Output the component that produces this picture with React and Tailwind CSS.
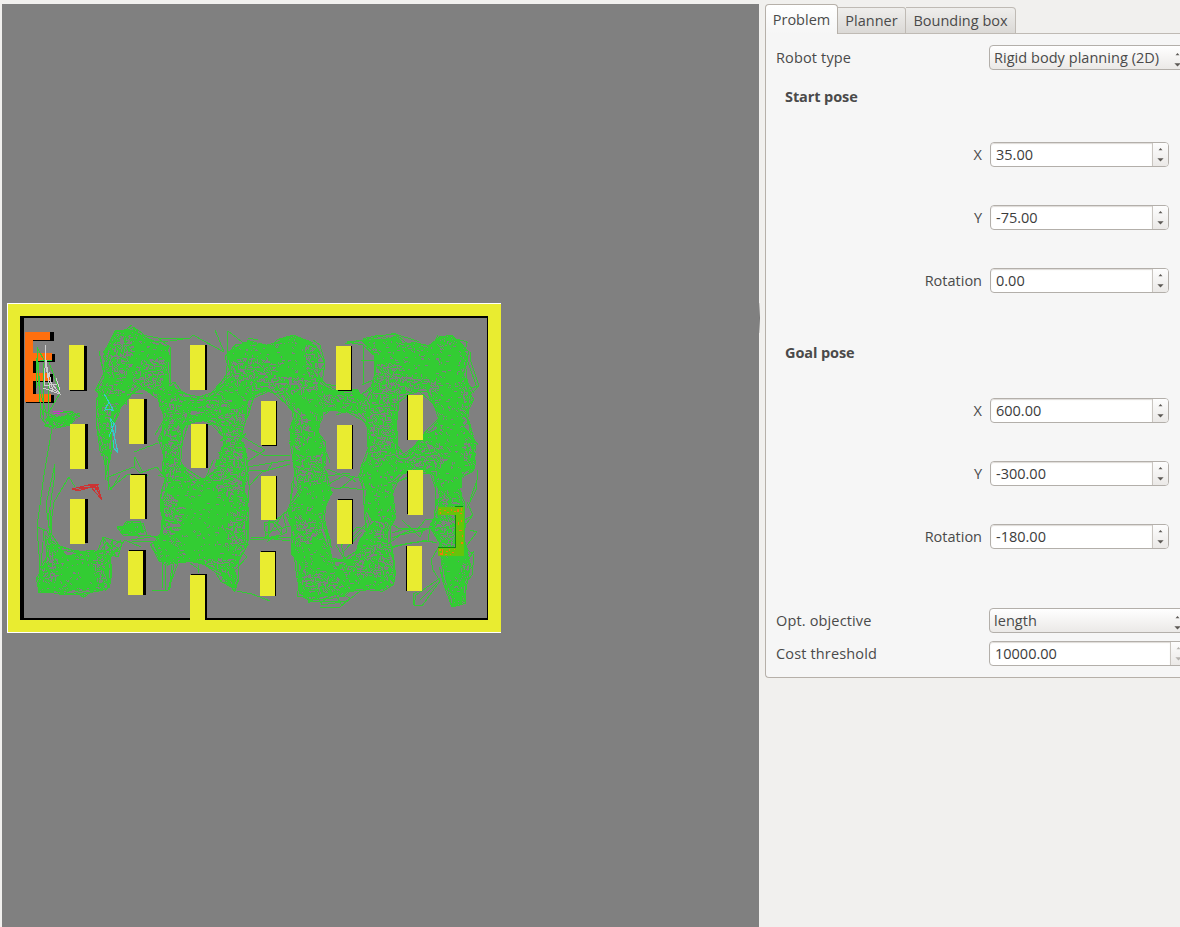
import React from "react";

const GREEN = "#33cc33";
const YELLOW = "#e9ec30";
const GRAY = "#808080";

// Free-space areas densely covered by the roadmap.
const REGIONS = [
  "133,327 124,331 114,334 110,342 103,352 105,376 97,398 98,402 122,402 134,382 144,390 156,396 168,392 166,365 169,346 158,345 148,342",
  "98,398 100,425 103,445 106,460 110,461 109,430 115,415 126,398 112,396",
  "162,388 160,397 165,415 165,428 159,437 167,452 162,472 168,485 160,508 165,528 155,545 164,560 190,562 213,565 224,579 234,592 236,590 234,568 241,551 249,545 242,528 248,518 244,490 248,478 244,462 246,448 241,436 245,415 249,398 258,394 272,390 284,392 288,400 298,412 296,422 289,428 291,441 297,448 292,462 296,478 299,495 288,510 289,520 294,532 291,555 301,565 300,585 299,594 312,597 320,597 345,594 360,588 380,590 391,586 393,568 388,550 387,530 386,522 396,518 391,505 391,482 400,474 437,471 440,500 437,515 430,524 438,535 441,555 445,578 451,592 453,606 462,605 464,596 461,588 466,578 469,555 462,540 462,472 475,470 476,442 466,428 467,408 472,392 462,372 467,358 464,345 452,335 440,336 427,348 417,344 403,344 395,336 385,338 362,341 374,352 375,382 368,402 350,392 330,390 319,383 313,368 318,357 311,342 298,338 286,336 272,346 248,340 227,353 233,375 222,388 205,400 182,397 174,385",
];
// Gaps inside the covered areas.
const GAPS = [
  "183,424 190,419 212,420 220,424 223,444 216,460 213,476 204,478 194,484 184,470 178,452 182,436",
  "322,408 345,413 364,414 371,442 362,475 366,492 364,508 373,522 364,533 353,558 336,566 322,532 323,514 331,495 325,478 326,455 318,430",
  "397,395 432,388 433,405 442,415 435,422 437,429 422,437 414,448 408,460 396,458 394,440 396,410",
  "176,404 190,406 205,405 200,408 180,407",
  "182,410 200,412 218,410 212,416 184,417",
];
const BLOBS = [
  "47,538 67,555 97,553 110,556 108,582 104,589 70,591 38,592 41,567 52,562",
  "119,527 133,523 142,524 144,533 124,534",
  "44,419 60,416 78,414 69,422 53,427",
  "154,545 164,535 176,545 178,562 163,562",
];
// Areas where the cover is thinner: [x, y, radius x, radius y].
const THIN = [
  [108, 395, 15, 12], [106, 440, 7, 45], [172, 440, 12, 40], [200, 405, 32, 16],
  [235, 372, 16, 10], [250, 368, 25, 10], [232, 425, 14, 20], [282, 385, 40, 8], [296, 430, 14, 22],
  [230, 470, 20, 25], [345, 403, 26, 14], [380, 420, 17, 42], [385, 375, 22, 12], [345, 350, 30, 10],
  [152, 380, 20, 22], [240, 530, 14, 20], [168, 515, 13, 20], [310, 470, 25, 15], [298, 530, 20, 15],
  [320, 585, 22, 14], [425, 455, 22, 14], [470, 400, 9, 40], [445, 520, 12, 30], [105, 565, 12, 20],
  [48, 565, 10, 18], [60, 418, 20, 6], [220, 570, 20, 12], [385, 540, 12, 25], [120, 350, 12, 30],
  [408, 385, 35, 8], [472, 450, 8, 20], [365, 560, 28, 16], [315, 355, 10, 25],
];
const pt = (s) => s.split(" ").map((p) => p.split(",").map(Number));
const poly = (s) => "M" + s.split(" ").join("L") + "Z";

function inside(x, y, p) {
  let r = false;
  for (let i = 0, j = p.length - 1; i < p.length; j = i++) {
    const [xi, yi] = p[i];
    const [xj, yj] = p[j];
    if (yi > y !== yj > y && x < ((xj - xi) * (y - yi)) / (yj - yi) + xi) r = !r;
  }
  return r;
}
function edgeDistance(x, y, p) {
  let m = 1e9;
  for (let i = 0, j = p.length - 1; i < p.length; j = i++) {
    const dx = p[i][0] - p[j][0];
    const dy = p[i][1] - p[j][1];
    let t = ((x - p[j][0]) * dx + (y - p[j][1]) * dy) / (dx * dx + dy * dy);
    t = Math.max(0, Math.min(1, t));
    m = Math.min(m, Math.hypot(x - p[j][0] - t * dx, y - p[j][1] - t * dy));
  }
  return m;
}

function buildRoadmap() {
  let seed = 90210;
  const rnd = () => {
    seed = (seed * 1664525 + 1013904223) >>> 0;
    return seed / 4294967296;
  };
  const polys = [...REGIONS, ...BLOBS].map(pt);
  const gaps = GAPS.map(pt);
  let holes = "";
  for (let i = 0; i < 32000; i++) {
    const x = 28 + rnd() * 455;
    const y = 322 + rnd() * 292;
    if (!polys.some((p) => inside(x, y, p))) continue;
    const d = Math.min(...[...polys, ...gaps].map((p) => edgeDistance(x, y, p)));
    const cluster = 0.5 + 0.5 * Math.sin(x * 0.21 + 2 * Math.sin(y * 0.13)) * Math.cos(y * 0.19 + x * 0.05);
    const thin = THIN.some(([cx, cy, rx, ry]) => ((x - cx) / rx) ** 2 + ((y - cy) / ry) ** 2 < 1);
    const chance = thin ? 0.95 : (d < 6 ? 0.5 : 0.17) * (0.2 + 1.3 * cluster);
    if (rnd() > chance) continue;
    const px = Math.floor(x);
    const py = Math.floor(y);
    const k = rnd();
    if (k < 0.4) holes += `M${px} ${py}h1v1h-1z`;
    else if (k < 0.65) {
      const w = 2 + Math.floor(rnd() * (thin ? 4 : 2));
      holes += `M${px} ${py}h${w}v1h-${w}z`;
    } else if (k < 0.85) {
      const h = 2 + Math.floor(rnd() * (thin ? 3 : 1));
      holes += `M${px} ${py}h1v${h}h-1z`;
    } else holes += `M${px} ${py}h1v1h1v1h-1v-1h-1z`;
  }
  let fray = "";
  [...polys, ...gaps].forEach((p) => {
    const around = [];
    for (let i = 0; i < p.length; i++) {
      const a = p[i];
      const b = p[(i + 1) % p.length];
      const steps = Math.max(1, Math.round(Math.hypot(b[0] - a[0], b[1] - a[1]) / 5));
      for (let s = 0; s < steps; s++)
        around.push([
          a[0] + ((b[0] - a[0]) * s) / steps + (rnd() - 0.5) * 8,
          a[1] + ((b[1] - a[1]) * s) / steps + (rnd() - 0.5) * 8,
        ]);
    }
    around.forEach((a) => {
      const i = around.indexOf(a);
      for (let k = 0; k < 2; k++) {
        const b = around[(i + 1 + Math.floor(rnd() * 5)) % around.length];
        if (Math.hypot(a[0] - b[0], a[1] - b[1]) < 26)
          fray += `M${a[0].toFixed(1)} ${a[1].toFixed(1)}L${b[0].toFixed(1)} ${b[1].toFixed(1)}`;
      }
    });
  });
  return { holes, fray };
}
const { holes, fray } = buildRoadmap();

// Sparse roadmap edges.
const EDGES = [
  "37,347 38,370 41,418 47,425 52,428 44,475 37,527 40,567 38,593",
  "37,347 45,362 48,375 49,418M37,347 40,390 48,420M43,362 44,415M40,360 52,361M49,362 60,393 49,412M36,358 36,388",
  "55,464 54,480 48,520 52,545 55,560M55,464 46,505 50,535M44,420 42,410 62,420 80,413",
  "69,477 54,502 50,530M69,477 75,487M37,527 47,531 53,545M50,510 52,535 66,556M41,565 44,530",
  "142,335 158,338 190,338 193,335 224,352M170,341 190,338M158,338 170,347 171,385M167,347 167,380",
  "133,327 142,333 150,344M142,335 130,346M142,341 168,341",
  "215,330 224,352M228,331 227,352M228,331 246,345M228,352 226,380 215,395M248,338 258,340",
  "107,478 118,473 134,467 140,473 157,467 165,478M107,478 111,490 120,475M108,462 108,490M134,467 135,457 143,473M111,488 128,474 148,476",
  "134,452 158,443M155,435 167,415M158,475 175,480",
  "97,553 103,537 110,549 121,540M99,553 107,542 116,556M103,537 122,543 118,557 104,552 121,541M110,543 119,549 108,557 112,541M98,550 120,552M103,538 106,556 122,546M113,541 111,557",
  "121,545 125,540 141,547M131,540 150,537 167,535M147,535 158,538M132,541 160,542M117,527 143,523 147,535 123,535 117,527M117,527 145,531M119,530 133,522",
  "152,590 168,590 178,563M162,562 162,588M165,564 165,590M169,590 172,565M174,564 170,588",
  "83,592 83,598 92,591M76,592 83,597M40,593 52,588M110,555 111,583 105,591M107,553 107,588",
  "198,565 198,573M237,591 252,594 270,601M235,570 247,557 243,553M190,563 200,570",
  "248,448 263,455 290,456M247,462 265,450 240,435M247,467 290,460M225,418 225,445M250,485 262,472 290,464M247,470 268,470 272,463",
  "250,537 290,538M250,540 292,537M264,523 266,538 282,516M268,521 269,540M272,521 282,535",
  "264,523 275,521 287,511M265,526 274,521 281,527 281,535 266,538M270,519 268,541 287,532M265,533 290,526M266,538 290,541M283,514 287,532",
  "313,362 325,363 322,382 318,375 325,363 317,350M325,363 320,345 313,340M325,363 324,370 314,368",
  "347,342 363,345 373,355M347,342 365,340 395,333 402,343M363,345 364,385M361,360 375,361M362,385 375,379M345,344 372,338",
  "327,403 350,405 367,407M325,410 350,412 367,412M324,415 345,399 366,411M325,398 340,410 366,399M330,388 345,407M336,415 367,403",
  "327,485 345,475 356,482M327,487 340,489 355,476M330,495 318,500M327,469 340,474M340,487 366,490M345,475 365,479M327,476 350,473",
  "334,560 357,562 367,555M334,572 352,561M336,545 345,560 340,540M341,546 357,527 368,530M343,552 362,532M350,540 366,524M342,575 362,545 366,558M341,565 360,552",
  "392,533 405,529 420,532 437,525M387,545 400,535 427,529M390,547 410,543 428,541 437,543M402,520 420,537 424,528M392,538 412,530M428,541 430,527",
  "387,549 402,545 427,540M388,522 400,529 437,528M417,530 425,520 440,519",
  "417,592 413,594 414,605 422,606 440,581 433,570 431,560 440,545M414,605 416,595 440,578M420,600 437,583",
  "320,607 340,607 350,598 342,594M308,603 320,595M320,603 335,593 342,606M340,607 360,591M302,596 310,601 345,602",
  "297,597 300,580M297,597 312,596M308,603 315,593 322,605 341,602",
  "478,470 476,490 467,508M477,480 470,500M467,502 473,515 463,528M473,515 465,520M470,530 477,532 465,548M474,551 468,560M465,548 474,555 472,575 462,588",
  "470,352 471,362 479,386 473,392M468,362 477,388M463,375 474,393M479,386 470,388M467,430 478,445",
  "172,397 235,400M174,405 230,403M172,413 238,406M174,421 234,412M183,425 219,416M175,424 212,424M176,402 190,416M204,396 218,418",
  "172,393 182,400 214,397 235,390M175,410 207,409 222,414M205,395 205,415M170,418 200,408 235,409",
  "260,345 252,371M163,410 164,440M98,410 108,438 108,480M102,395 143,393M97,400 118,399 135,384",
  "96,398 97,426 107,475M104,445 109,478M96,426 105,455 106,480M98,402 115,414 125,402",
  "395,458 408,461 418,450M397,460 404,473M414,447 423,439 430,453M418,445 412,448 430,460M392,455 410,466 425,458M420,455 400,470",
];

const boxes = [
  [69, 345, 45, 70, 346, 17, 45], [70, 424, 45, 71, 424, 17, 45], [129, 399, 45, 130, 399, 17, 45],
  [70, 499, 45, 71, 499, 17, 44], [130, 475, 44, 131, 474, 16, 45], [128, 551, 44, 129, 550, 17, 45],
  [190, 345, 45, 191, 345, 16, 45], [191, 424, 44, 192, 424, 16, 44], [261, 401, 44, 262, 401, 15, 45],
  [336, 346, 44, 338, 346, 14, 45], [337, 425, 44, 338, 425, 15, 44], [261, 476, 44, 262, 476, 15, 43],
  [260, 552, 44, 261, 551, 15, 45], [337, 500, 44, 338, 499, 15, 45], [408, 395, 45, 407, 395, 15, 45],
  [408, 470, 45, 407, 471, 15, 43], [407, 546, 45, 406, 546, 15, 45], [190, 575, 47, 191, 574, 16, 46],
];

const line = (s) =>
  s.split("M").map((run) => "M" + run.trim().split(" ").join("L")).join("");

function Scene() {
  return (
    <svg width="757" height="923" viewBox="2 4 757 923" shapeRendering="crispEdges" className="block">
      <path d="M7 303h494v330h-494z" fill="#fff" />
      <path d="M8 304h493v328h-493z" fill={YELLOW} />
      <path d="M20 316h468v304h-468z" fill="#000" />
      <path d="M24 318h463v300h-463z" fill={GRAY} />
      <path d="M50 332h4v9H33v13h22v8H36v12h17v8H36v13h18v8H26V336h7V332z" fill="#000" />
      <path d="M36 341h16v12H36zM36 362h16v11H36zM36 382h14v12H36z" fill={GRAY} />
      <path d="M25 332h25v8H33v13h19v8H33v12h17v8H33v13h18v8H25z" fill="#ff6f0e" />
      {REGIONS.map((r) => <path key={r} d={poly(r)} fill={GREEN} />)}
      {GAPS.map((r) => <path key={r} d={poly(r)} fill={GRAY} />)}
      <path d="M328 390L358 389L366 404L366 407L345 410L330 400Z" fill={GREEN} />
      {BLOBS.map((r) => <path key={r} d={poly(r)} fill={GREEN} />)}
      <path d={holes} fill={GRAY} />
      <g fill="none" stroke={GREEN} strokeWidth="1">
        <path d={fray} />
        {EDGES.map((e) => <path key={e} d={line(e)} />)}
      </g>
      {boxes.map(([x, y, h, sx, sy, sw, sh]) => (
        <g key={x + "-" + y}>
          <rect x={sx} y={sy} width={sw} height={sh} fill="#000" />
          <rect x={x} y={y} width="15" height={h} fill={YELLOW} />
        </g>
      ))}
      <path d="M438 507h26v49h-26v-8h18v-33h-18z" fill="#66c40a" />
      <path d="M455 515h1v33h-18v-1h17zM455 506h8v1h-8z" fill="#0d8a12" />
      <path
        d="M439 509h2v1h-2zM440 512h1v2h-1zM444 510h2v1h-2zM447 512h2v1h-2zM451 509h1v2h-1zM454 511h2v1h-2zM457 509h2v3h-2zM461 508h1v3h-1zM460 513h2v1h-2zM458 522h1v3h-1zM461 520h1v2h-1zM459 530h3v1h-3zM462 535h1v2h-1zM461 542h2v2h-2zM439 549h2v2h-2zM442 549h1v4h-1zM440 553h3v2h-3zM446 551h2v1h-2zM449 549h1v2h-1zM452 552h2v1h-2zM445 554h2v1h-2zM454 549h1v1h-1zM450 554h1v1h-1z"
        fill="#f0780e"
      />
      <g fill="none" strokeWidth="1">
        <path d="M45.500 345V360L44 385M46 360L49 380L60 394L43 388M49 372L53 392M45 362L50 388L60 393M56 378L60 390M44 386L57 384" stroke="#cfcfcf" />
        <path d="M53 412L56 411H63M54 413H60" stroke="#cc33cc" />
        <path d="M72 489L88 485L97 484L102 500L91 487L78 491ZM74 490L95 486L102 500M77 488L98 487M95 484V490M84 486L98 485L97 489L102 500" stroke="#cc3333" />
        <path d="M104 394L109 402L105 410L113 409L108 401M108 409L114 411M110 418L116 426L113 447L118 453L113 430L110 418M111 424L115 440L118 453M105 410L107 405M114 424L109 437" stroke="#33cccc" />
      </g>
    </svg>
  );
}

function Arrows({ pale, className = "" }) {
  const c = pale ? "#b5b2ae" : "#5c5955";
  return (
    <svg width="7" height="15" viewBox="0 0 7 15" className={`shrink-0 ${className}`}>
      <path d="M1.500 3.300L3.500 1L5.500 3.300Z" fill={c} />
      <path d="M0.400 11.300L3.500 14.500L6.600 11.300Z" fill={c} />
    </svg>
  );
}

function Spin({ value, wide, pale }) {
  return (
    <div className={`flex h-[25px] shrink-0 overflow-hidden rounded-[4px] border border-[#b3afaa] bg-white ${wide ? "w-[198px]" : "w-[179px]"}`}>
      <div className="flex grow items-center rounded-l-[3px] pl-[5px] text-[#3c3c3c] shadow-[inset_0_1px_1px_#dedbd8]">{value}</div>
      <div className="flex w-[16px] shrink-0 items-center justify-center border-l border-[#c9c5c0] bg-linear-to-b from-[#fdfdfd] to-[#ebe9e7]">
        <Arrows pale={pale} />
      </div>
    </div>
  );
}

function Combo({ value }) {
  return (
    <div className="flex h-[25px] w-[210px] shrink-0 items-center rounded-[4px] border border-[#b3afaa] bg-linear-to-b from-white to-[#ebe9e7] pl-[4px]">
      <span className="w-[180px] tracking-[0.04px]">{value}</span>
      <Arrows className="mt-[3px]" />
    </div>
  );
}

function Pose({ title, rows }) {
  return (
    <section className="h-[256px]">
      <h2 className="ml-[19px] h-[26px] font-bold leading-[26px] tracking-[-0.1px]">{title}</h2>
      <div className="mt-[32px] flex flex-col gap-[38px]">
        {rows.map(([label, value]) => (
          <div key={label} className="flex h-[25px] items-center">
            <span className="w-[217px] pr-[1px] text-right">{label}</span>
            <div className="ml-[7px]"><Spin value={value} /></div>
          </div>
        ))}
      </div>
    </section>
  );
}

function Field({ label, children }) {
  return (
    <div className="flex h-[25px] items-center">
      <span className="ml-[10px] w-[213px] shrink-0 tracking-[0.15px]">{label}</span>
      {children}
    </div>
  );
}

export default function App() {
  return (
    <div className="flex h-[927px] w-[1180px] overflow-hidden whitespace-nowrap bg-[#f1f0ee] font-['Open_Sans','Noto_Sans',sans-serif] text-[14.5px] text-[#4a4a4a]">
      <main className="mt-[4px] ml-[2px] h-[923px] w-[757px] shrink-0 bg-[#808080]">
        <Scene />
      </main>
      <div className="mt-[303px] h-[30px] w-[1px] shrink-0 bg-linear-to-b from-[#d8d7d5] via-[#777777] to-[#d8d7d5]" />
      <aside className="ml-[5px] w-[415px] shrink-0 pt-[4px]">
        <nav className="flex h-[30px] items-end">
          <div className="z-10 flex h-[30px] w-[73px] shrink-0 items-center justify-center rounded-t-[4px] border border-b-0 border-[#b6b0a9] bg-linear-to-b from-white to-[#f6f6f6]">Problem</div>
          <div className="flex h-[27px] w-[68px] shrink-0 items-center justify-center rounded-tr-[3px] border-t border-r border-b border-[#bfbab4] bg-linear-to-b from-[#efeeec] to-[#dbd9d6]">Planner</div>
          <div className="flex h-[27px] w-[110px] shrink-0 items-center justify-center rounded-tr-[4px] border-t border-r border-b border-[#bfbab4] bg-linear-to-b from-[#efeeec] to-[#dbd9d6]">Bounding box</div>
          <div className="h-px grow bg-[#bfbab4]" />
        </nav>
        <div className="h-[644px] w-[430px] rounded-bl-[4px] border-b border-l border-[#b6b0a9] bg-[#f6f6f6] pt-[11px]">
          <Field label="Robot type"><Combo value="Rigid body planning (2D)" /></Field>
          <div className="mt-[14px]">
            <Pose title="Start pose" rows={[["X", "35.00"], ["Y", "-75.00"], ["Rotation", "0.00"]]} />
            <Pose title="Goal pose" rows={[["X", "600.00"], ["Y", "-300.00"], ["Rotation", "-180.00"]]} />
          </div>
          <div className="mt-[12px] flex flex-col gap-[8px]">
            <Field label="Opt. objective"><Combo value="length" /></Field>
            <Field label="Cost threshold"><Spin value="10000.00" wide pale /></Field>
          </div>
        </div>
      </aside>
    </div>
  );
}
